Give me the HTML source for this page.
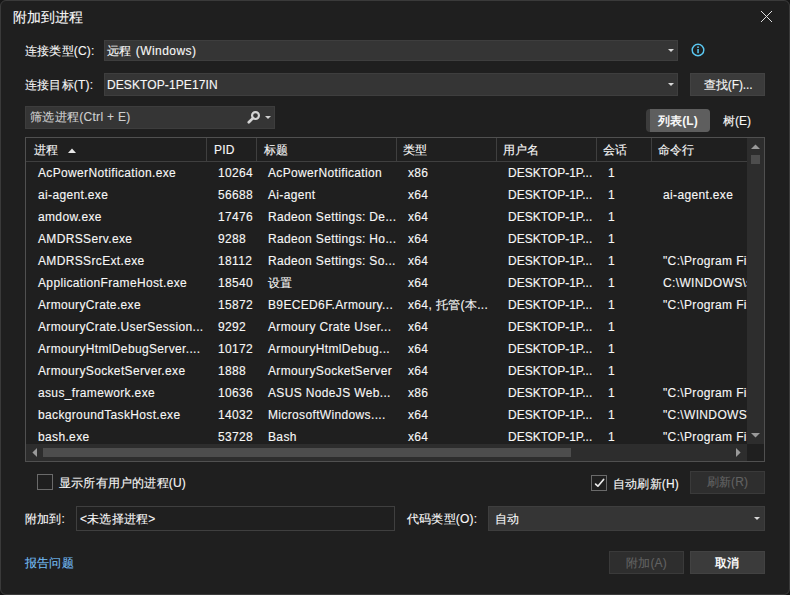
<!DOCTYPE html>
<html><head><meta charset="utf-8">
<style>
*{margin:0;padding:0;box-sizing:border-box}
html,body{width:790px;height:595px;overflow:hidden;background:#161616}
body{font-family:"Liberation Sans",sans-serif;font-size:12px;color:#f7f7f7;position:relative;letter-spacing:0.2px;-webkit-text-stroke:0.12px currentColor}
.win{position:absolute;left:0;top:0;width:790px;height:595px;background:#1f1f1f;border-radius:6px;overflow:hidden}
.wb{position:absolute;left:0;top:0;width:790px;height:595px;border:1px solid #3a3a3a;border-radius:6px}
.a{position:absolute;white-space:nowrap}
.t{line-height:15px}
.combo{position:absolute;background:#353535;border:1px solid #3e3e3e}
.arrow{position:absolute;width:0;height:0;border-left:3px solid transparent;border-right:3px solid transparent;border-top:3px solid #d8d8d8}
.btn{position:absolute;background:#3b3b3b;text-align:center;border:1px solid #424242}
.tbl{position:absolute;left:25px;top:137px;width:740px;height:325px;border:1px solid #505050;overflow:hidden;background:#1f1f1f}
.hd{position:absolute;left:0;top:0;height:24px;width:740px;border-bottom:1px solid #3f3f3f}
.dv{position:absolute;top:0;width:1px;height:23px;background:#3f3f3f}
.row{position:absolute;left:0;height:22px;width:721px}
.row span{position:absolute;top:4px;line-height:15px;white-space:nowrap;letter-spacing:0.35px}
.cb{position:absolute;width:16px;height:16px;border:1px solid #6a6a6a}
</style></head><body>
<div class="win">
  <div class="a t" style="left:13px;top:9px;font-size:14px;line-height:17px;letter-spacing:0.1px">附加到进程</div>
  <svg class="a" style="left:760px;top:10px" width="13" height="13" viewBox="0 0 13 13"><path d="M1 1L12 12M12 1L1 12" stroke="#e0e0e0" stroke-width="1"/></svg>

  <div class="a t" style="left:25px;top:44px">连接类型(C):</div>
  <div class="combo" style="left:104px;top:40px;width:574px;height:21px"><span class="a t" style="left:2px;top:3px;letter-spacing:0.45px">远程 (Windows)</span><div class="arrow" style="left:563px;top:8px"></div></div>
  <svg class="a" style="left:691px;top:43px" width="14" height="14" viewBox="0 0 14 14"><circle cx="7" cy="7" r="5.8" fill="none" stroke="#5ac8f2" stroke-width="1.45"/><rect x="6.3" y="6" width="1.5" height="4.2" fill="#5ac8f2"/><circle cx="7.05" cy="4.2" r="0.85" fill="#5ac8f2"/></svg>

  <div class="a t" style="left:25px;top:78px">连接目标(T):</div>
  <div class="combo" style="left:104px;top:73px;width:574px;height:23px"><span class="a t" style="left:2px;top:4px;letter-spacing:0.1px">DESKTOP-1PE17IN</span><div class="arrow" style="left:563px;top:9px"></div></div>
  <div class="btn" style="left:690px;top:73px;width:75px;height:23px"><span class="a t" style="left:13px;top:4px;letter-spacing:-0.1px">查找(F)...</span></div>

  <div class="combo" style="left:25px;top:106px;width:250px;height:23px;border:1px solid #3d3d3d"><span class="a t" style="left:4px;top:3px;color:#d0d0d0;letter-spacing:0.3px">筛选进程(Ctrl + E)</span>
    <svg class="a" style="left:221px;top:2px" width="14" height="15" viewBox="0 0 14 15"><circle cx="8.5" cy="6.5" r="3.45" fill="none" stroke="#d4d4d4" stroke-width="2.15"/><path d="M6 9.1L1.8 13.3" stroke="#d4d4d4" stroke-width="2.7" stroke-linecap="round"/></svg>
    <div class="arrow" style="left:239px;top:9px;border-top-color:#d0d0d0"></div>
  </div>

  <div class="a" style="left:646px;top:109px;width:64px;height:23px;background:#3c3c3c;border-radius:4px"></div>
  <div class="a" style="left:650px;top:109px;width:60px;height:23px;background:#5e5e5e;border-radius:0 4px 4px 0"></div>
  <div class="a t" style="left:658px;top:114px;font-weight:bold;-webkit-text-stroke:0;letter-spacing:0.1px">列表(L)</div>
  <div class="a t" style="left:723px;top:114px;letter-spacing:0">树(E)</div>

  <div class="tbl">
    <div class="hd">
      <span class="a t" style="left:8px;top:5px">进程</span>
      <svg class="a" style="left:42px;top:10px" width="8" height="5" viewBox="0 0 8 5"><path d="M0 5L4 0.5L8 5Z" fill="#e8e8e8"/></svg>
      <div class="dv" style="left:180px"></div><span class="a t" style="left:188px;top:5px">PID</span>
      <div class="dv" style="left:230px"></div><span class="a t" style="left:238px;top:5px">标题</span>
      <div class="dv" style="left:370px"></div><span class="a t" style="left:377px;top:5px">类型</span>
      <div class="dv" style="left:470px"></div><span class="a t" style="left:477px;top:5px">用户名</span>
      <div class="dv" style="left:570px"></div><span class="a t" style="left:577px;top:5px">会话</span>
      <div class="dv" style="left:625px"></div><span class="a t" style="left:632px;top:5px">命令行</span>
    </div>
    <div style="position:absolute;left:0;top:24px;width:721px;height:282px;overflow:hidden">
      <div class="row" style="top:0px"><span style="left:12px">AcPowerNotification.exe</span><span style="left:192px">10264</span><span style="left:242px">AcPowerNotification</span><span style="left:382px">x86</span><span style="left:482px;letter-spacing:0">DESKTOP-1P...</span><span style="left:582px">1</span></div>
      <div class="row" style="top:22px"><span style="left:12px">ai-agent.exe</span><span style="left:192px">56688</span><span style="left:242px">Ai-agent</span><span style="left:382px">x64</span><span style="left:482px;letter-spacing:0">DESKTOP-1P...</span><span style="left:582px">1</span><span style="left:637px">ai-agent.exe</span></div>
      <div class="row" style="top:44px"><span style="left:12px">amdow.exe</span><span style="left:192px">17476</span><span style="left:242px">Radeon Settings: De...</span><span style="left:382px">x64</span><span style="left:482px;letter-spacing:0">DESKTOP-1P...</span><span style="left:582px">1</span></div>
      <div class="row" style="top:66px"><span style="left:12px">AMDRSServ.exe</span><span style="left:192px">9288</span><span style="left:242px">Radeon Settings: Ho...</span><span style="left:382px">x64</span><span style="left:482px;letter-spacing:0">DESKTOP-1P...</span><span style="left:582px">1</span></div>
      <div class="row" style="top:88px"><span style="left:12px">AMDRSSrcExt.exe</span><span style="left:192px">18112</span><span style="left:242px">Radeon Settings: So...</span><span style="left:382px">x64</span><span style="left:482px;letter-spacing:0">DESKTOP-1P...</span><span style="left:582px">1</span><span style="left:637px">"C:\Program Files</span></div>
      <div class="row" style="top:110px"><span style="left:12px">ApplicationFrameHost.exe</span><span style="left:192px">18540</span><span style="left:242px">设置</span><span style="left:382px">x64</span><span style="left:482px;letter-spacing:0">DESKTOP-1P...</span><span style="left:582px">1</span><span style="left:637px">C:\WINDOWS\system32</span></div>
      <div class="row" style="top:132px"><span style="left:12px">ArmouryCrate.exe</span><span style="left:192px">15872</span><span style="left:242px">B9ECED6F.Armoury...</span><span style="left:382px">x64, 托管(本...</span><span style="left:482px;letter-spacing:0">DESKTOP-1P...</span><span style="left:582px">1</span><span style="left:637px">"C:\Program Files</span></div>
      <div class="row" style="top:154px"><span style="left:12px">ArmouryCrate.UserSession...</span><span style="left:192px">9292</span><span style="left:242px">Armoury Crate User...</span><span style="left:382px">x64</span><span style="left:482px;letter-spacing:0">DESKTOP-1P...</span><span style="left:582px">1</span></div>
      <div class="row" style="top:176px"><span style="left:12px">ArmouryHtmlDebugServer....</span><span style="left:192px">10172</span><span style="left:242px">ArmouryHtmlDebug...</span><span style="left:382px">x64</span><span style="left:482px;letter-spacing:0">DESKTOP-1P...</span><span style="left:582px">1</span></div>
      <div class="row" style="top:198px"><span style="left:12px">ArmourySocketServer.exe</span><span style="left:192px">1888</span><span style="left:242px">ArmourySocketServer</span><span style="left:382px">x64</span><span style="left:482px;letter-spacing:0">DESKTOP-1P...</span><span style="left:582px">1</span></div>
      <div class="row" style="top:220px"><span style="left:12px">asus_framework.exe</span><span style="left:192px">10636</span><span style="left:242px">ASUS NodeJS Web...</span><span style="left:382px">x86</span><span style="left:482px;letter-spacing:0">DESKTOP-1P...</span><span style="left:582px">1</span><span style="left:637px">"C:\Program Files</span></div>
      <div class="row" style="top:242px"><span style="left:12px">backgroundTaskHost.exe</span><span style="left:192px">14032</span><span style="left:242px">MicrosoftWindows....</span><span style="left:382px">x64</span><span style="left:482px;letter-spacing:0">DESKTOP-1P...</span><span style="left:582px">1</span><span style="left:637px">"C:\WINDOWS\system32</span></div>
      <div class="row" style="top:264px"><span style="left:12px">bash.exe</span><span style="left:192px">53728</span><span style="left:242px">Bash</span><span style="left:382px">x64</span><span style="left:482px;letter-spacing:0">DESKTOP-1P...</span><span style="left:582px">1</span><span style="left:637px">"C:\Program Files</span></div>
    </div>
    <div class="a" style="left:721px;top:0;width:17px;height:306px;background:#2d2d2d">
      <svg class="a" style="left:4px;top:6px" width="9" height="5" viewBox="0 0 9 5"><path d="M0 5L4.5 0.4L9 5Z" fill="#9a9a9a"/></svg>
      <div class="a" style="left:4px;top:17px;width:9px;height:9px;background:#4d4d4d"></div>
      <svg class="a" style="left:4px;top:295px" width="9" height="5" viewBox="0 0 9 5"><path d="M0 0L4.5 4.6L9 0Z" fill="#9a9a9a"/></svg>
    </div>
    <div class="a" style="left:0;top:306px;width:721px;height:17px;background:#2d2d2d">
      <svg class="a" style="left:6px;top:4px" width="5" height="9" viewBox="0 0 5 9"><path d="M5 0L0.4 4.5L5 9Z" fill="#9a9a9a"/></svg>
      <div class="a" style="left:17px;top:4px;width:528px;height:9px;background:#4d4d4d"></div>
      <svg class="a" style="left:710px;top:4px" width="5" height="9" viewBox="0 0 5 9"><path d="M0 0L4.6 4.5L0 9Z" fill="#9a9a9a"/></svg>
    </div>
  </div>

  <div class="cb" style="left:37px;top:474px"></div>
  <div class="a t" style="left:59px;top:476px">显示所有用户的进程(U)</div>
  <div class="cb" style="left:591px;top:475px"></div>
  <svg class="a" style="left:591px;top:475px" width="16" height="16" viewBox="0 0 16 16"><path d="M4.6 9.1L6.9 11.2L12.6 4.5" fill="none" stroke="#ececec" stroke-width="1.7" stroke-linecap="round" stroke-linejoin="round"/></svg>
  <div class="a t" style="left:613px;top:477px">自动刷新(H)</div>
  <div class="btn" style="left:690px;top:471px;width:75px;height:23px;background:#2e2e2e;border:1px solid #3a3a3a;color:#626262"><span class="t" style="position:relative;top:3px">刷新(R)</span></div>

  <div class="a t" style="left:25px;top:512px">附加到:</div>
  <div class="a" style="left:76px;top:506px;width:319px;height:25px;border:1px solid #3f3f3f"><span class="a t" style="left:3px;top:5px">&lt;未选择进程&gt;</span></div>
  <div class="a t" style="left:407px;top:512px">代码类型(O):</div>
  <div class="combo" style="left:488px;top:506px;width:277px;height:25px"><span class="a t" style="left:6px;top:5px">自动</span><div class="arrow" style="left:265px;top:10px"></div></div>

  <div class="a t" style="left:25px;top:556px;color:#74bcf3">报告问题</div>
  <div class="btn" style="left:609px;top:551px;width:75px;height:23px;background:#2e2e2e;border:1px solid #3a3a3a;color:#626262"><span class="t" style="position:relative;top:4px">附加(A)</span></div>
  <div class="btn" style="left:690px;top:551px;width:75px;height:23px;font-weight:bold;-webkit-text-stroke:0"><span class="t" style="position:relative;top:4px">取消</span></div>
</div>
<div class="wb"></div>
</body></html>
